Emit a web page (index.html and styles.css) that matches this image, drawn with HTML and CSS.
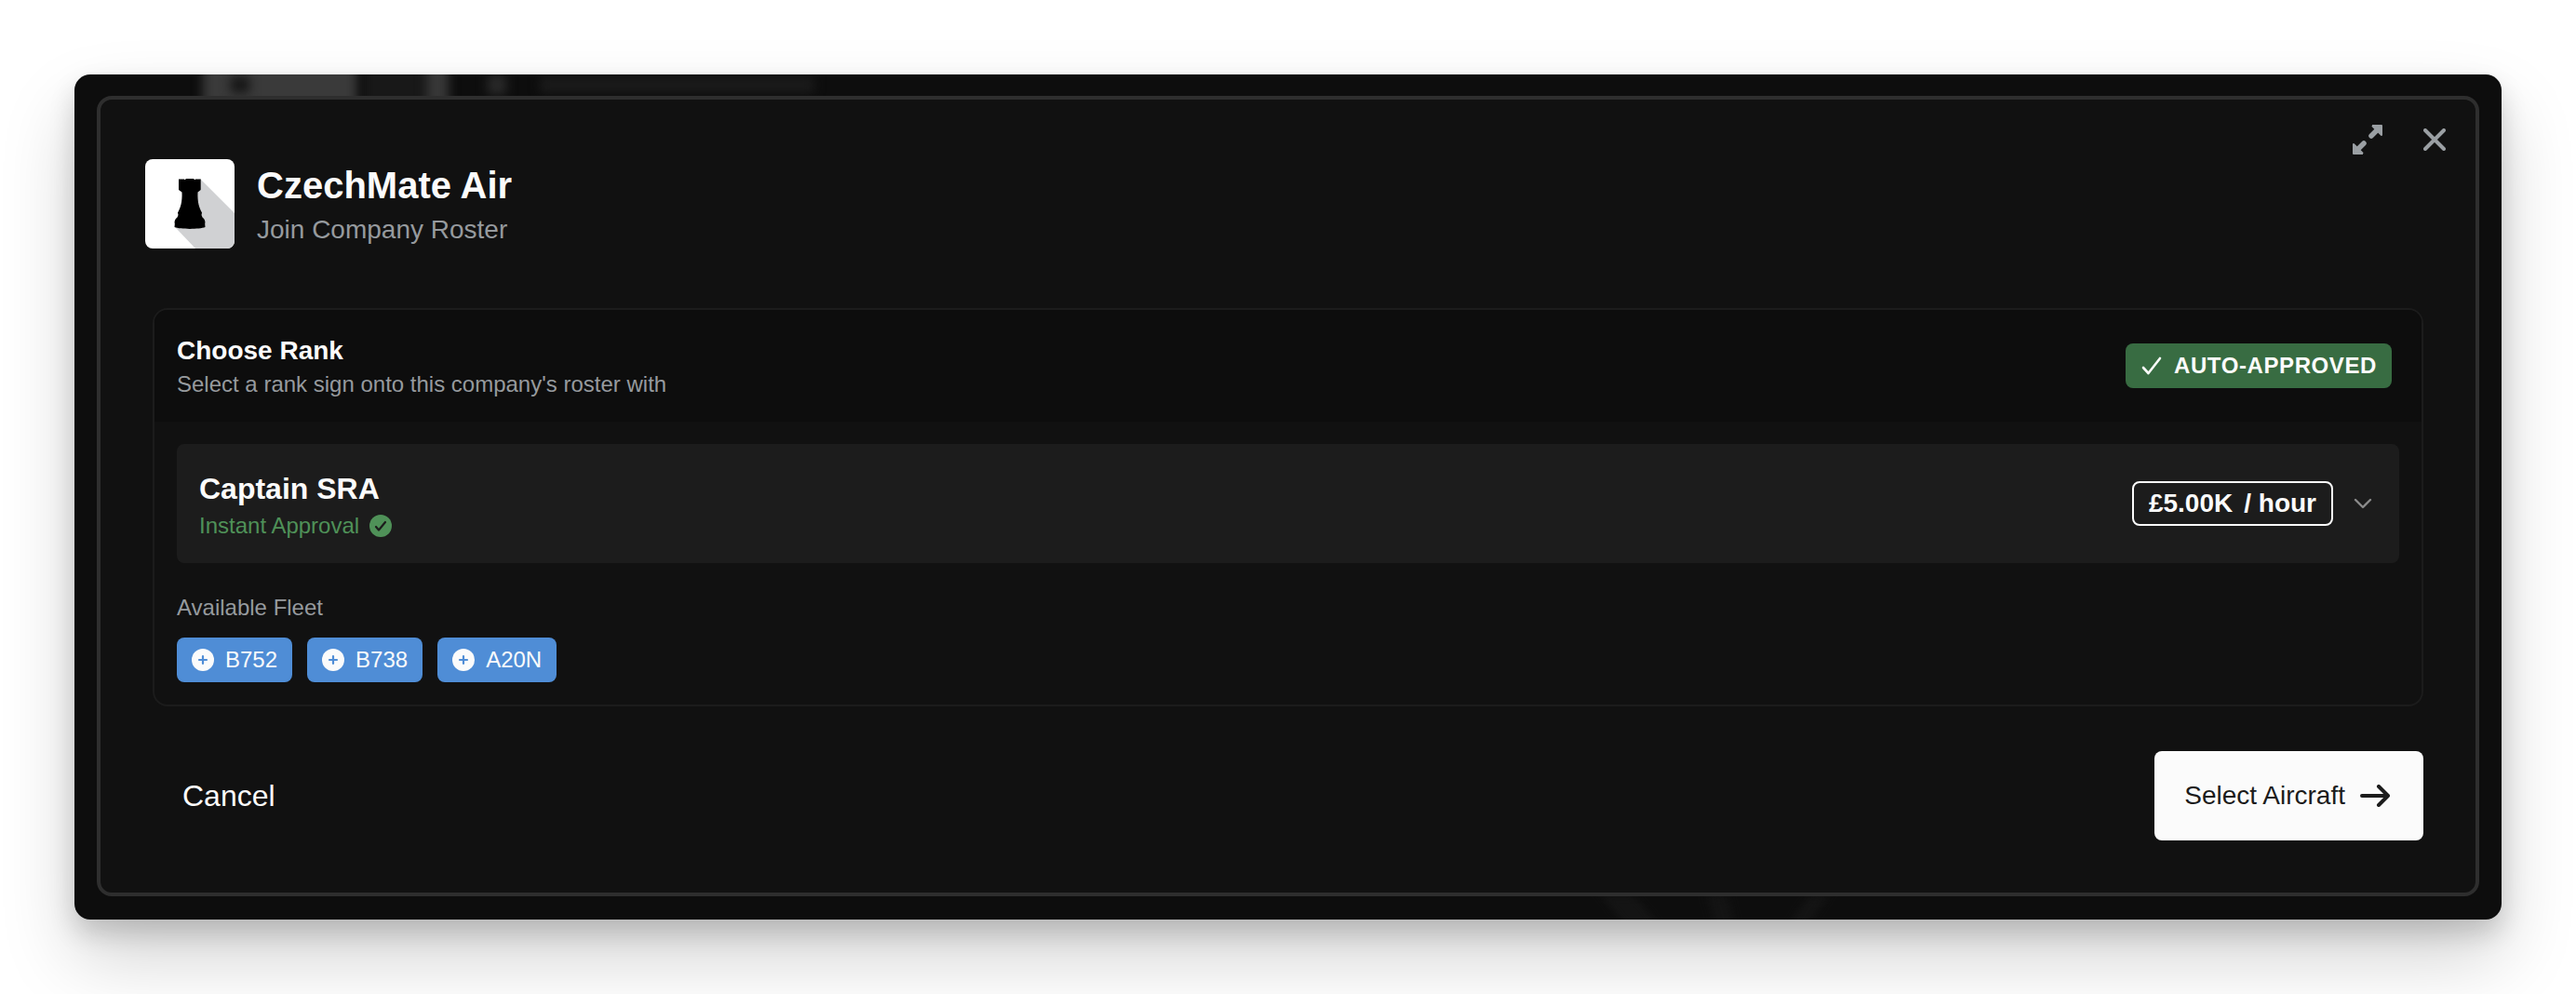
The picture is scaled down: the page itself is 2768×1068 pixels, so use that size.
FILE: index.html
```html
<!DOCTYPE html>
<html lang="en">

<head>
  <meta charset="UTF-8" />
  <meta name="viewport" content="width=device-width, initial-scale=1.0" />
  <title>CzechMate Air - Join Company Roster</title>
  <link rel="stylesheet" href="styles.css">
</head>

<body>
  <main class="window">
    <div class="backdrop">
      <span class="smudge smudge-title"></span>
      <span class="smudge smudge-gap"></span>
      <span class="smudge smudge-faint"></span>
      <span class="smudge smudge-letter"></span>
      <span class="smudge smudge-dot"></span>
      <span class="smudge smudge-text"></span>
      <span class="smudge smudge-bottom"></span>
      <span class="smudge smudge-bottom second"></span>
      <span class="smudge smudge-bottom third"></span>
    </div>
    <section class="modal">
      <div class="modal-actions">
        <svg class="icon-expand" viewBox="0 0 32 32">
          <path d="M21 1h10v10L21 1M11 31H1V21l10 10" fill="currentColor" stroke="currentColor" stroke-width="2" stroke-linejoin="round" />
          <path d="M20 12l7-7M12 20l-7 7" stroke="currentColor" stroke-width="5.500" stroke-linecap="round" />
        </svg>
        <svg class="icon-close" viewBox="0 0 24 24">
          <path d="M2 2l20 20M22 2L2 22" stroke="currentColor" stroke-width="4" stroke-linecap="round" />
        </svg>
      </div>

      <header class="company">
        <svg class="logo" viewBox="0 0 96 96">
          <rect width="96" height="96" fill="#fff" />
          <path d="M59 21L96 58V96H54L33 74z" fill="#d0d1d3" />
          <path d="M36 21.500h6v.5h1.500V21h9v1H54v-.5h5.700V33L56.500 35.500C56 46 58 52 61 57.500L60.500 60L61.500 62.500C64 64.500 65 67 64.200 69.500L64.500 73C58 75.500 38 75.500 31.500 73L31.800 69.500C31 67 32 64.500 34.500 62.500L35.500 60L35 57.500C38 52 40 46 39.500 35.500L36 33z" fill="#000" />
        </svg>
        <div class="company-name">
          <h1>CzechMate Air</h1>
          <p>Join Company Roster</p>
        </div>
      </header>

      <section class="card">
        <div class="card-header">
          <div class="card-title">
            <h2>Choose Rank</h2>
            <p>Select a rank sign onto this company's roster with</p>
          </div>
          <span class="badge-approved">
            <svg class="icon-check" viewBox="0 0 24 24">
              <path d="M3 14l5.500 6L21 4" stroke="currentColor" stroke-width="2.600" stroke-linecap="round" stroke-linejoin="round" />
            </svg>
            AUTO-APPROVED
          </span>
        </div>
        <div class="card-body">
          <div class="rank">
            <div class="rank-name">
              <h3>Captain SRA</h3>
              <p class="instant">
                Instant Approval
                <svg class="icon-small" viewBox="0 0 24 24">
                  <circle cx="12" cy="12" r="12" fill="currentColor" />
                  <path d="M7 13l3 3.500L17 8" stroke="#1c1c1c" stroke-width="2.200" stroke-linecap="round" stroke-linejoin="round" />
                </svg>
              </p>
            </div>
            <div class="rank-pay">
              <span class="pay"><span>£5.00K</span><span>/ hour</span></span>
              <svg class="icon-chevron" viewBox="0 0 20 12">
                <path d="M2 2l8 8 8-8" stroke="currentColor" stroke-width="2.400" stroke-linecap="round" stroke-linejoin="round" />
              </svg>
            </div>
          </div>
          <p class="fleet-label">Available Fleet</p>
          <div class="fleet">
            <span class="aircraft">
              <svg class="icon-small" viewBox="0 0 24 24">
                <circle cx="12" cy="12" r="12" fill="currentColor" />
                <path d="M12 8v8M8 12h8" stroke="#4f8dd6" stroke-width="2.200" stroke-linecap="round" />
              </svg>
              B752
            </span>
            <span class="aircraft">
              <svg class="icon-small" viewBox="0 0 24 24">
                <circle cx="12" cy="12" r="12" fill="currentColor" />
                <path d="M12 8v8M8 12h8" stroke="#4f8dd6" stroke-width="2.200" stroke-linecap="round" />
              </svg>
              B738
            </span>
            <span class="aircraft">
              <svg class="icon-small" viewBox="0 0 24 24">
                <circle cx="12" cy="12" r="12" fill="currentColor" />
                <path d="M12 8v8M8 12h8" stroke="#4f8dd6" stroke-width="2.200" stroke-linecap="round" />
              </svg>
              A20N
            </span>
          </div>
        </div>
      </section>

      <footer class="modal-footer">
        <button class="cancel">Cancel</button>
        <button class="select">
          Select Aircraft
          <svg class="icon-arrow" viewBox="0 0 32 24">
            <path d="M2 12h28M20 2l10 10-10 10" stroke="currentColor" stroke-width="4" stroke-linecap="round" stroke-linejoin="round" />
          </svg>
        </button>
      </footer>
    </section>
  </main>
</body>

</html>
```
FILE: styles.css
```css
* {
  box-sizing: border-box;
}

body {
  margin: 0;
  height: 1068px;
  padding: 80px;
  overflow: hidden;
  background-color: #fff;
  color: #fbfbfb;
  font-family: "Liberation Sans", Arial, sans-serif;
}

h1,
h2,
h3,
p {
  margin: 0;
}

svg {
  display: block;
  flex: none;
  fill: none;
}

button {
  border: 0;
  background: none;
  font-family: inherit;
}

.window {
  position: relative;
  height: 908px;
  padding: 23px 24px 25px;
  border-radius: 17px;
  background-color: #0d0d0d;
  box-shadow: 0 40px 80px rgba(0, 0, 0, 0.18), 0 14px 28px rgba(0, 0, 0, 0.16);
}

/* blurred page behind the modal */
.backdrop {
  position: absolute;
  inset: 0;
  overflow: hidden;
  border-radius: 17px;
}

.smudge {
  position: absolute;
  top: -20px;
  height: 60px;
  filter: blur(6px);
}

.smudge-title {
  left: 138px;
  width: 166px;
  background-color: #3a3a3a;
}

.smudge-gap {
  top: 2px;
  left: 168px;
  width: 20px;
  height: 18px;
  background-color: #151515;
}

.smudge-faint {
  left: 310px;
  width: 70px;
  background-color: #181818;
}

.smudge-letter {
  left: 378px;
  width: 24px;
  background-color: #383838;
}

.smudge-dot {
  top: 0;
  left: 444px;
  width: 20px;
  height: 22px;
  background-color: #2a2a2a;
}

.smudge-text {
  top: 2px;
  left: 500px;
  width: 295px;
  height: 18px;
  background-color: #1b1b1b;
}

.smudge-bottom {
  top: 880px;
  left: 1655px;
  width: 36px;
  height: 40px;
  background-color: #141414;
  transform: skewX(40deg);
}

.second {
  left: 1760px;
  width: 20px;
  transform: skewX(15deg);
}

.third {
  left: 1852px;
  width: 20px;
  transform: skewX(-35deg);
}

.modal {
  position: relative;
  height: 860px;
  padding: 64px 56px 56px;
  border: 4px solid #2e2e2e;
  border-radius: 16px;
  background-color: #111;
}

.modal-actions {
  position: absolute;
  top: 27px;
  right: 32px;
  display: flex;
  align-items: center;
  gap: 44px;
  color: #9a9fa3;
}

.icon-expand {
  width: 32px;
  height: 32px;
}

.icon-close {
  width: 24px;
  height: 24px;
}

.company {
  display: flex;
  align-items: center;
  gap: 24px;
  height: 96px;
  margin-left: -8px;
}

.logo {
  width: 96px;
  height: 96px;
  border-radius: 8px;
}

.company-name {
  padding-top: 6px;
}

.company h1 {
  font-size: 40px;
  line-height: 50px;
}

.company p {
  color: #969a9e;
  font-size: 28px;
  line-height: 46px;
}

.card {
  height: 428px;
  margin-top: 64px;
  border: 2px solid #1c1c1c;
  border-radius: 16px;
  overflow: hidden;
}

.card-header {
  display: flex;
  align-items: center;
  justify-content: space-between;
  height: 120px;
  padding: 0 32px 0 24px;
  background-color: #0d0d0d;
}

.card-title {
  padding-top: 3px;
}

.card-header h2 {
  font-size: 28px;
  line-height: 36px;
}

.card-header p {
  color: #969a9e;
  font-size: 24px;
  line-height: 36px;
}

.badge-approved {
  display: flex;
  align-items: center;
  gap: 12px;
  height: 48px;
  padding: 0 16px;
  border-radius: 8px;
  background-color: #386c42;
  font-size: 24px;
  font-weight: bold;
  letter-spacing: 0.6px;
}

.icon-check,
.icon-small {
  width: 24px;
  height: 24px;
}

.card-body {
  padding: 24px;
}

.rank {
  display: flex;
  align-items: center;
  justify-content: space-between;
  height: 128px;
  padding: 0 29px 0 24px;
  border-radius: 8px;
  background-color: #1c1c1c;
}

.rank-name {
  padding-top: 6px;
}

.rank h3 {
  font-size: 32px;
  line-height: 42px;
}

.instant {
  display: flex;
  align-items: center;
  gap: 11px;
  color: #4f9158;
  font-size: 24px;
  line-height: 38px;
}

.rank-pay {
  display: flex;
  align-items: center;
  gap: 22px;
}

.pay {
  display: flex;
  align-items: center;
  gap: 12px;
  height: 48px;
  padding: 0 16px;
  border: 2px solid #fbfbfb;
  border-radius: 8px;
  font-size: 28px;
  font-weight: bold;
}

.icon-chevron {
  width: 20px;
  height: 12px;
  color: #8b8b8b;
}

.fleet-label {
  margin-top: 30px;
  color: #969a9e;
  font-size: 24px;
  line-height: 36px;
}

.fleet {
  display: flex;
  gap: 16px;
  margin-top: 14px;
}

.aircraft {
  display: flex;
  align-items: center;
  gap: 12px;
  height: 48px;
  padding: 0 16px;
  border-radius: 8px;
  background-color: #4f8dd6;
  font-size: 24px;
}

.modal-footer {
  display: flex;
  align-items: center;
  justify-content: space-between;
  margin-top: 48px;
}

.cancel {
  padding: 0 32px;
  color: #fbfbfb;
  font-size: 32px;
}

.select {
  display: flex;
  align-items: center;
  gap: 16px;
  height: 96px;
  padding: 0 36px 0 32px;
  border-radius: 8px;
  background-color: #fbfbfb;
  color: #1c1c1c;
  font-size: 28px;
}

.icon-arrow {
  width: 32px;
  height: 24px;
}
```
